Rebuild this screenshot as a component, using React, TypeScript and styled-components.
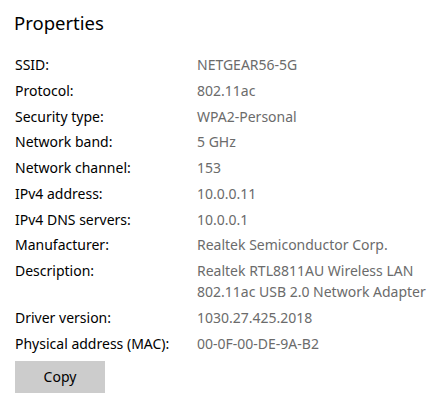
import React from "react";
import styled, { createGlobalStyle } from "styled-components";

const GlobalStyle = createGlobalStyle`
  html, body {
    margin: 0;
    padding: 0;
    background: #ffffff;
  }
  body {
    font-family: "Noto Sans", "Open Sans", "Liberation Sans", sans-serif;
  }
`;

const Panel = styled.div`
  width: 440px;
  height: 418px;
  box-sizing: border-box;
  padding: 9px 0 0 15px;
  display: flex;
  flex-direction: column;
`;

const Title = styled.h2`
  margin: 0 0 18px -1px;
  font-size: 18.5px;
  font-weight: 400;
  line-height: 27px;
  color: #000000;
`;

const Grid = styled.dl`
  margin: 0;
  display: grid;
  grid-template-columns: 182px 1fr;
  row-gap: 4.75px;
  font-size: 14px;
  line-height: 21px;
`;

const Label = styled.dt`
  margin: 0;
  color: #000000;
  white-space: nowrap;
`;

const Value = styled.dd`
  margin: 0;
  color: #6b6b6b;
  white-space: nowrap;
`;

const CopyButton = styled.button`
  margin-top: 7px;
  width: 90px;
  height: 32px;
  border: none;
  background: #cccccc;
  color: #000000;
  font-family: inherit;
  font-size: 14px;
  padding: 0;
  cursor: pointer;
`;

const rows: [string, string[]][] = [
  ["SSID:", ["NETGEAR56-5G"]],
  ["Protocol:", ["802.11ac"]],
  ["Security type:", ["WPA2-Personal"]],
  ["Network band:", ["5 GHz"]],
  ["Network channel:", ["153"]],
  ["IPv4 address:", ["10.0.0.11"]],
  ["IPv4 DNS servers:", ["10.0.0.1"]],
  ["Manufacturer:", ["Realtek Semiconductor Corp."]],
  [
    "Description:",
    ["Realtek RTL8811AU Wireless LAN", "802.11ac USB 2.0 Network Adapter"],
  ],
  ["Driver version:", ["1030.27.425.2018"]],
  ["Physical address (MAC):", ["00-0F-00-DE-9A-B2"]],
];

export default function App() {
  return (
    <>
      <GlobalStyle />
      <Panel>
        <Title>Properties</Title>
        <Grid>
          {rows.map(([label, lines]) => (
            <React.Fragment key={label}>
              <Label>{label}</Label>
              <Value>
                {lines.map((l, i) => (
                  <div key={i}>{l}</div>
                ))}
              </Value>
            </React.Fragment>
          ))}
        </Grid>
        <div>
          <CopyButton>Copy</CopyButton>
        </div>
      </Panel>
    </>
  );
}
